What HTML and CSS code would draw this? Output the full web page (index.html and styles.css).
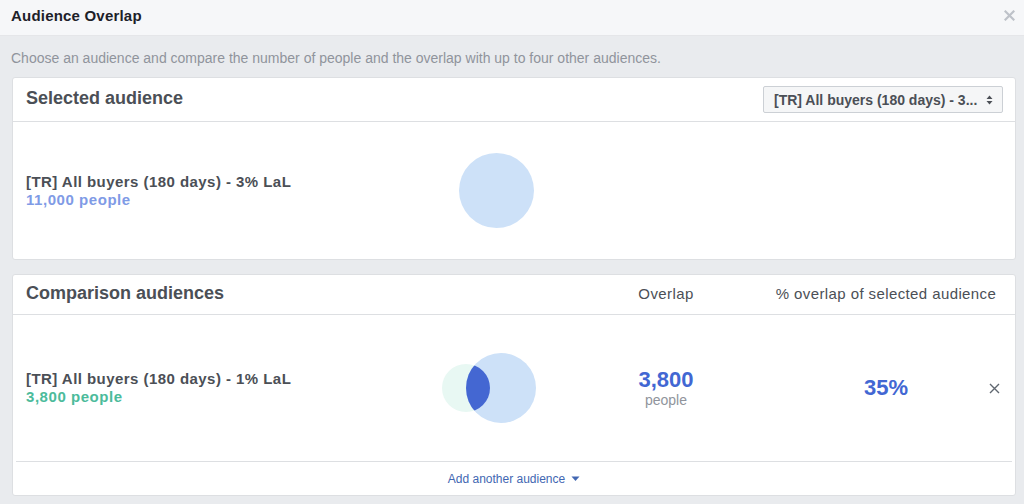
FILE: index.html
```html
<!DOCTYPE html>
<html lang="en">
<head>
<meta charset="utf-8">
<title>Audience Overlap</title>
<link rel="stylesheet" href="styles.css">
</head>
<body>
<div class="dialog">
  <div class="dlg-header">
    <span class="dlg-title">Audience Overlap</span>
    <svg class="dlg-close" width="11" height="11" viewBox="0 0 11 11"><path d="M1.5 1.5L9.5 9.5M9.5 1.5L1.5 9.5" stroke="#bec2c9" stroke-width="2.2" stroke-linecap="square"/></svg>
  </div>
  <p class="desc">Choose an audience and compare the number of people and the overlap with up to four other audiences.</p>

  <section class="card card-selected">
    <div class="card-head head-selected">
      <h2 class="card-title">Selected audience</h2>
      <div class="select">
        <span class="select-text">[TR] All buyers (180 days) - 3...</span>
        <svg class="select-arrows" width="7" height="10" viewBox="0 0 7 10"><path d="M3.5 0.5L6.5 4H0.5Z M3.5 9.5L6.5 6H0.5Z" fill="#4b4f56"/></svg>
      </div>
    </div>
    <div class="row row-selected">
      <div class="aud">
        <div class="aud-name">[TR] All buyers (180 days) - 3% LaL</div>
        <div class="aud-count count-blue">11,000 people</div>
      </div>
      <div class="viz">
        <div class="circle-main"></div>
      </div>
    </div>
  </section>

  <section class="card card-compare">
    <div class="card-head grid head-compare">
      <h2 class="card-title span2">Comparison audiences</h2>
      <div class="col-head">Overlap</div>
      <div class="col-head">% overlap of selected audience</div>
    </div>
    <div class="grid row-compare">
      <div class="aud">
        <div class="aud-name">[TR] All buyers (180 days) - 1% LaL</div>
        <div class="aud-count count-green">3,800 people</div>
      </div>
      <div class="viz">
        <svg class="venn" width="100" height="72" viewBox="0 0 100 72">
          <defs>
            <clipPath id="clipGreen"><circle cx="20" cy="36" r="24"/></clipPath>
          </defs>
          <circle cx="20" cy="36" r="24" fill="#e8f8f3"/>
          <circle cx="55" cy="36" r="35" fill="#cde1f8"/>
          <circle cx="55" cy="36" r="35" fill="#4467d2" clip-path="url(#clipGreen)"/>
        </svg>
      </div>
      <div class="metric">
        <div class="metric-num">3,800</div>
        <div class="metric-unit">people</div>
      </div>
      <div class="metric">
        <div class="metric-num">35%</div>
      </div>
      <div class="remove">
        <svg width="11" height="11" viewBox="0 0 11 11"><path d="M1 1L10 10M10 1L1 10" stroke="#606770" stroke-width="1.4"/></svg>
      </div>
    </div>
    <div class="card-foot">
      <span class="add-link">Add another audience</span>
      <svg class="add-caret" width="9" height="6" viewBox="0 0 9 6"><path d="M0.5 0.5H8.5L4.5 5Z" fill="#4267b2"/></svg>
    </div>
  </section>
</div>
</body>
</html>
```

FILE: styles.css
```css
* { box-sizing: border-box; }

html, body {
  margin: 0;
  padding: 0;
}

body {
  background: #e9ebee;
  font-family: "Liberation Sans", Arial, sans-serif;
  color: #4b4f56;
  width: 1024px;
  height: 504px;
  overflow: hidden;
}

.dialog {
  display: flex;
  flex-direction: column;
}

.dlg-header {
  height: 36px;
  background: #f6f7f9;
  border-bottom: 1px solid #e5e6e9;
  display: flex;
  align-items: center;
  justify-content: space-between;
  padding: 0 9px 5px 11px;
}

.dlg-title {
  font-size: 15px;
  font-weight: bold;
  letter-spacing: 0.2px;
  color: #1d2129;
}

.dlg-close { display: block; }

.desc {
  margin: 0;
  padding: 14px 11px 11px;
  font-size: 14px;
  line-height: 16px;
  color: #90949c;
}

.card {
  background: #fff;
  border: 1px solid #dddfe2;
  border-radius: 3px;
  margin: 0 8px 0 12px;
}

.card-compare { margin-top: 14px; }

.card-head {
  border-bottom: 1px solid #dddfe2;
  padding: 0 12px 0 13px;
}

.head-selected {
  height: 44px;
  display: flex;
  align-items: center;
  justify-content: space-between;
}

.card-title {
  margin: 0;
  font-size: 18px;
  font-weight: bold;
  color: #4b4f56;
  line-height: 20px;
  padding-bottom: 3px;
}

.select {
  width: 240px;
  height: 27px;
  border: 1px solid #ccd0d5;
  border-radius: 2px;
  background: #f5f6f7;
  display: flex;
  align-items: center;
  justify-content: space-between;
  padding: 0 9px 0 10px;
}

.select-text {
  font-size: 14px;
  font-weight: bold;
  color: #4b4f56;
  white-space: nowrap;
}

.select-arrows { display: block; }

.row-selected {
  height: 137px;
  display: flex;
  align-items: center;
  padding: 0 13px;
}

.aud {
  width: 420px;
  flex: none;
}

.aud-name {
  font-size: 15px;
  font-weight: bold;
  letter-spacing: 0.45px;
  color: #4b4f56;
  line-height: 18px;
}

.aud-count {
  font-size: 15px;
  font-weight: bold;
  letter-spacing: 0.55px;
  line-height: 18px;
}

.count-blue { color: #7f9be6; }
.count-green { color: #4cbb9b; }

.viz {
  width: 100px;
  display: flex;
  justify-content: center;
  align-items: center;
}

.viz svg { display: block; }

.venn { overflow: visible; }

.circle-main {
  width: 75px;
  height: 75px;
  border-radius: 50%;
  background: #cde1f8;
}

.grid {
  display: grid;
  grid-template-columns: 420px 100px 240px 200px 1fr;
  align-items: center;
  padding: 0 0 0 13px;
}

.head-compare {
  height: 40px;
}

.span2 { grid-column: span 2; }

.col-head {
  justify-self: center;
  white-space: nowrap;
  font-size: 15px;
  letter-spacing: 0.4px;
  color: #4b4f56;
  padding-bottom: 3px;
}

.row-compare {
  height: 146px;
  padding-top: 0;
}

.metric {
  justify-self: center;
  text-align: center;
}

.metric-num {
  font-size: 22px;
  font-weight: bold;
  color: #4267d3;
  line-height: 24px;
}

.metric-unit {
  font-size: 14px;
  color: #90949c;
  line-height: 16px;
}

.remove {
  justify-self: start;
  padding-left: 3px;
}

.remove svg { display: block; }

.card-foot {
  margin: 0 3px;
  border-top: 1px solid #dddfe2;
  height: 34px;
  display: flex;
  align-items: center;
  justify-content: center;
  gap: 6px;
}

.add-link {
  font-size: 12px;
  color: #4267b2;
}

.add-caret { display: block; }
```
